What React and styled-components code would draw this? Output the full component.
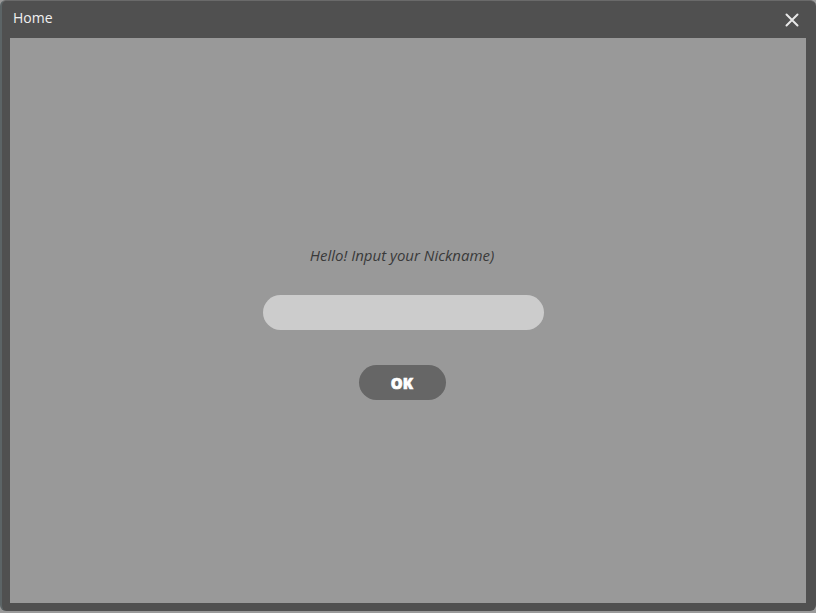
import styled, { createGlobalStyle } from "styled-components";

const GlobalStyle = createGlobalStyle`
  html, body {
    margin: 0;
    padding: 0;
    background: #9a9a9a;
    font-family: "Open Sans", "Noto Sans", sans-serif;
  }
`;

const Window = styled.div`
  width: 816px;
  height: 611px;
  box-sizing: border-box;
  background: #505050;
  border-radius: 6px;
  border-top: 1px solid #6a6a6a;
  border-left: 2px solid #5c6466;
  display: flex;
  flex-direction: column;
  padding: 0 10px 8px 8px;
`;

const TitleBar = styled.div`
  height: 37px;
  display: flex;
  align-items: flex-start;
  justify-content: space-between;
`;

const Title = styled.span`
  color: #f0f0f0;
  font-size: 14px;
  line-height: 16px;
  margin-top: 9px;
  margin-left: 3px;
`;

const CloseButton = styled.button`
  border: none;
  background: transparent;
  padding: 0;
  margin-top: 12px;
  margin-right: 7px;
  width: 14px;
  height: 14px;
  cursor: pointer;
  display: flex;
`;

const Content = styled.div`
  flex: 1;
  background: #999999;
  display: flex;
  flex-direction: column;
  align-items: center;
  justify-content: center;
  padding: 4px 12px 0 0;
`;

const Prompt = styled.p`
  margin: 0;
  font-style: italic;
  font-size: 15px;
  color: #3a3a3a;
  line-height: 20px;
`;

const NickInput = styled.input`
  margin-top: 30px;
  margin-left: 2px;
  width: 281px;
  height: 35px;
  box-sizing: border-box;
  border: none;
  border-radius: 18px;
  background: #cccccc;
  outline: none;
  padding: 0 16px;
  font-size: 14px;
`;

const OkButton = styled.button`
  margin-top: 35px;
  width: 87px;
  height: 35px;
  border: none;
  border-radius: 18px;
  background: #666666;
  color: #ffffff;
  font-family: "Open Sans", sans-serif;
  font-weight: 800;
  font-size: 15px;
  -webkit-text-stroke: 0.6px #ffffff;
  cursor: pointer;
`;

const Home = () => {
  return (
    <>
      <GlobalStyle />
      <Window>
        <TitleBar>
          <Title>Home</Title>
          <CloseButton aria-label="close">
            <svg width="14" height="14" viewBox="0 0 14 14">
              <path d="M1.5 1.5 L12.5 12.5 M12.5 1.5 L1.5 12.5" stroke="#e8e8e8" strokeWidth="2" strokeLinecap="round" />
            </svg>
          </CloseButton>
        </TitleBar>
        <Content>
          <Prompt>Hello! Input your Nickname)</Prompt>
          <NickInput />
          <OkButton>OK</OkButton>
        </Content>
      </Window>
    </>
  );
};

export default Home;
